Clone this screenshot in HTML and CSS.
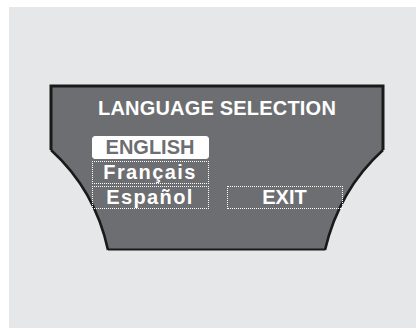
FILE: index.html
```html
<!DOCTYPE html>
<html lang="en">
<head>
    <meta charset="UTF-8">
    <title>Language Selection</title>
    <link rel="stylesheet" href="styles.css">
</head>
<body>
    <div class="page">
        <div class="panel">
            <svg class="panel-shape" viewBox="0 0 332 164" width="332" height="164">
                <path d="M0,0 L332,0 L332,64 Q288,104 274,164 L57,164 Q44,104 0,64 Z" fill="#6d6e71" stroke="none"/>
                <path d="M0,64 L0,0 L332,0 L332,64" fill="none" stroke="#1a1a1a" stroke-width="3"/>
                <path d="M0,64 Q44,104 57,164 M332,64 Q288,104 274,164" fill="none" stroke="#1a1a1a" stroke-width="2.6"/>
                <path d="M57,163.5 L274,163.5" fill="none" stroke="#1a1a1a" stroke-width="2"/>
            </svg>
            <h1 class="title">LANGUAGE SELECTION</h1>
            <div class="options">
                <div class="option selected">ENGLISH</div>
                <div class="option wide">Français</div>
                <div class="option wide">Español</div>
                <div class="option exit">EXIT</div>
            </div>
        </div>
    </div>
</body>
</html>
```

FILE: styles.css
```css
body {
    margin: 0;
    background: #ffffff;
    font-family: "Liberation Sans", "Arial", sans-serif;
}

.page {
    margin-top: 7px;
    margin-left: 9px;
    width: 407px;
    height: 321px;
    background: #e6e7e8;
    padding-top: 79px;
    padding-left: 42px;
    box-sizing: border-box;
}

.panel {
    position: relative;
    width: 332px;
    height: 164px;
}

.panel-shape {
    position: absolute;
    left: 0;
    top: 0;
    overflow: visible;
}

.title {
    position: relative;
    margin: 0;
    padding-top: 11px;
    font-size: 20px;
    line-height: 23px;
    font-weight: bold;
    color: #ffffff;
    text-align: center;
    letter-spacing: 0.2px;
}

.options {
    position: relative;
    display: grid;
    grid-template-columns: 117px 116px;
    grid-template-rows: 23px 23px 23px;
    column-gap: 18px;
    row-gap: 2px;
    justify-content: center;
    margin-top: 16px;
}

.option {
    grid-column: 1;
    box-sizing: border-box;
    border: 1px dotted #ffffff;
    color: #ffffff;
    font-size: 20px;
    line-height: 21px;
    font-weight: bold;
    text-align: center;
}

.wide {
    letter-spacing: 1.4px;
}

.selected {
    background: #ffffff;
    color: #6d6e71;
    border-radius: 3px;
    border-style: solid;
}

.exit {
    grid-column: 2;
    grid-row: 3;
}
```
